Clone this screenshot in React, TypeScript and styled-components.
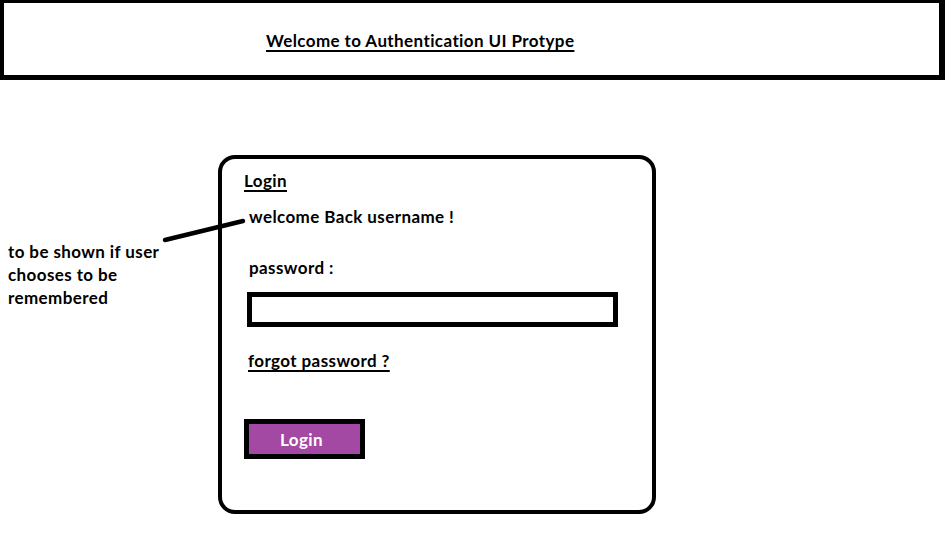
import React from "react";
import styled, { createGlobalStyle } from "styled-components";

const Global = createGlobalStyle`
  html, body { margin: 0; padding: 0; background: #fff; }
  body { font-family: Lato, "Open Sans", "Liberation Sans", sans-serif; font-weight: 700; color: #000; }
`;

const Page = styled.div`
  position: relative;
  width: 945px;
  height: 557px;
`;

const Header = styled.header`
  box-sizing: border-box;
  width: 945px;
  height: 80px;
  border-style: solid;
  border-color: #000;
  border-width: 3px 6px 5px 4px;
  padding: 28px 0 0 262px;
`;

const Title = styled.h1`
  margin: 0;
  font-size: 17px;
  letter-spacing: 0.4px;
  line-height: 20px;
  font-weight: 700;
  text-decoration: underline;
  text-decoration-thickness: 2px;
  text-underline-offset: 3px;
`;

const Main = styled.main`
  display: flex;
  padding: 75px 0 0 8px;
`;

const Note = styled.p`
  width: 210px;
  margin: 85px 0 0;
  font-size: 17px;
  letter-spacing: 0.4px;
  line-height: 23px;
`;

const Card = styled.section`
  box-sizing: border-box;
  width: 438px;
  height: 359px;
  border: 4px solid #000;
  border-radius: 17px;
  padding: 12px 0 0 22px;
  display: flex;
  flex-direction: column;
  align-items: flex-start;
`;

const Text = styled.div<{ $indent?: number; $top?: number; $underline?: boolean }>`
  margin-left: ${(p) => p.$indent ?? 0}px;
  margin-top: ${(p) => p.$top ?? 0}px;
  font-size: 17px;
  letter-spacing: 0.4px;
  line-height: 20px;
  text-decoration: ${(p) => (p.$underline ? "underline" : "none")};
  text-decoration-thickness: 2px;
  text-underline-offset: 3px;
`;

const Input = styled.input`
  box-sizing: border-box;
  margin: 14px 0 0 3px;
  width: 371px;
  height: 35px;
  border: 5px solid #000;
  border-radius: 0;
  outline: none;
  background: #fff;
  padding: 0;
`;

const Button = styled.button`
  box-sizing: border-box;
  margin-top: 48px;
  width: 121px;
  height: 40px;
  border: 5px solid #000;
  border-radius: 0;
  background: #a349a4;
  color: #fff;
  font-family: Lato, "Open Sans", "Liberation Sans", sans-serif;
  font-weight: 700;
  font-size: 17px;
  letter-spacing: 0.4px;
  padding: 0 6px 0 0;
`;

const Pointer = styled.svg`
  position: absolute;
  left: 0;
  top: 0;
  pointer-events: none;
`;

export default function App() {
  return (
    <Page>
      <Global />
      <Header>
        <Title>Welcome to Authentication UI Protype</Title>
      </Header>
      <Main>
        <Note>
          to be shown if user
          <br />
          chooses to be
          <br />
          remembered
        </Note>
        <Card>
          <Text $underline>Login</Text>
          <Text $indent={5} $top={16}>welcome Back username !</Text>
          <Text $indent={5} $top={31}>password :</Text>
          <Input type="password" />
          <Text $indent={4} $top={24} $underline>forgot password ?</Text>
          <Button>Login</Button>
        </Card>
      </Main>
      <Pointer width="945" height="557" viewBox="0 0 945 557">
        <line x1="165" y1="240" x2="243" y2="221" stroke="#000" strokeWidth="4.5" strokeLinecap="round" />
      </Pointer>
    </Page>
  );
}
